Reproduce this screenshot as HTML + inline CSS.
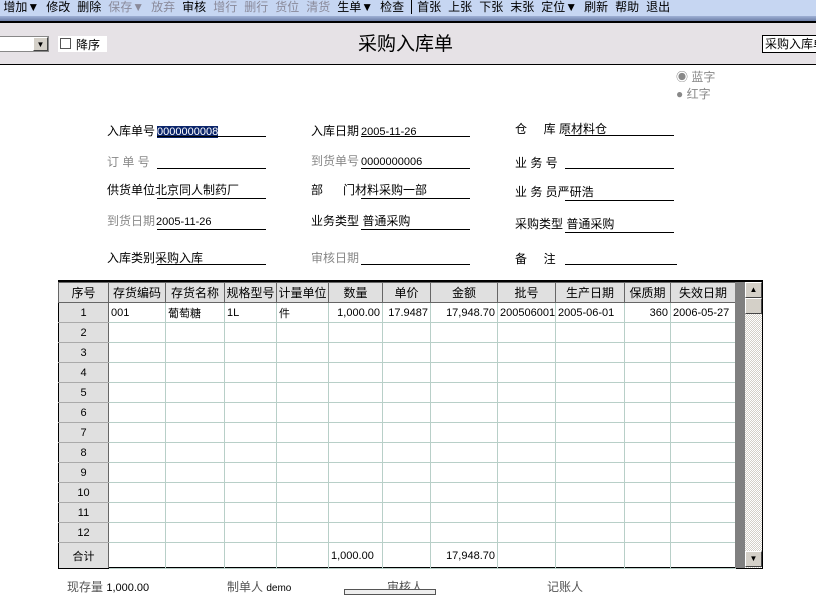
<!DOCTYPE html>
<html><head><meta charset="utf-8"><style>
*{margin:0;padding:0;box-sizing:border-box}
body{width:816px;height:593px;overflow:hidden;background:#fff;font-family:"Liberation Sans","Noto Sans CJK SC",sans-serif;font-size:12px;position:relative;color:#000}
.abs{position:absolute;white-space:nowrap}
#tb{position:absolute;left:0;top:0;width:816px;height:16px;background:#c6d6f2;font-size:12px;line-height:14px}
#tb span{margin-right:7px}
.g{color:#8a8a9a}
#band{position:absolute;left:0;top:16px;width:816px;height:7px;background:linear-gradient(#9fb1d6,#6d7fa8);border-bottom:2px solid #000}
#hdr{position:absolute;left:0;top:23px;width:816px;height:42px;background:#e6e2e6;border-bottom:1px solid #000}
.lbl{position:absolute;font-size:12px;white-space:nowrap}
.ul{position:absolute;height:1px;background:#000;width:109px}
table{position:absolute;left:58px;top:282px;border-collapse:collapse;font-size:11px;table-layout:fixed;width:677px}
td{border:1px solid #b8cfc8;height:20px;padding:0 2px;white-space:nowrap;overflow:hidden}
td.h{background:#e0e0e0;border:1px solid #666;text-align:center;font-size:12px;padding:0}
td.n{background:#e0e0e0;border-left:1px solid #000;border-right:1px solid #666;border-top:1px solid #aaa;border-bottom:1px solid #aaa;text-align:center}
.r{text-align:right}
</style></head><body>
<div id="tb">&nbsp;<span>增加▼</span><span>修改</span><span>删除</span><span class="g">保存▼</span><span class="g">放弃</span><span>审核</span><span class="g">增行</span><span class="g">删行</span><span class="g">货位</span><span class="g">清货</span><span>生单▼</span><span>检查</span><span style="border-left:1px solid #000;padding-left:5px">首张</span><span>上张</span><span>下张</span><span>末张</span><span>定位▼</span><span>刷新</span><span>帮助</span><span>退出</span></div>
<div id="band"></div>
<div id="hdr">
 <div class="abs" style="left:0;top:13px;width:49px;height:16px;background:#fff;border:1px solid #888;border-left:none"></div>
 <div class="abs" style="left:33px;top:14px;width:15px;height:14px;background:#d4d0c8;border:1px solid #fff;border-right-color:#444;border-bottom-color:#444;font-size:8px;text-align:center;line-height:13px">▼</div>
 <div class="abs" style="left:58px;top:13px;width:49px;height:16px;background:#fff"></div>
 <div class="abs" style="left:60px;top:15px;width:11px;height:11px;border:1px solid #555;background:#fff"></div>
 <div class="abs" style="left:76px;top:13px;font-size:12px">降序</div>
 <div class="abs" style="left:358px;top:6px;font-size:19px">采购入库单</div>
 <div class="abs" style="left:762px;top:12px;width:60px;height:18px;background:#fff;border:1px solid #000;border-right:none;font-size:12px;line-height:16px;padding-left:2px">采购入库单</div>
</div>
<div class="abs" style="left:676px;top:68px;color:#888">◉ 蓝字</div>
<div class="abs" style="left:676px;top:85px;color:#888">● <span>红字</span></div>

<div class="lbl" style="left:107px;top:122px">入库单号<span style="background:#0a246a;color:#fff;font-size:11px;margin-left:2px">0000000008</span></div><div class="ul" style="left:157px;top:136px"></div>
<div class="lbl" style="left:311px;top:122px">入库日期<span style="font-size:11px;margin-left:2px">2005-11-26</span></div><div class="ul" style="left:361px;top:136px"></div>
<div class="lbl" style="left:515px;top:120px">仓&nbsp;&nbsp;&nbsp;&nbsp;&nbsp;库 原材料仓</div><div class="ul" style="left:565px;top:135px"></div>

<div class="lbl" style="left:107px;top:153px;color:#888">订 单 号</div><div class="ul" style="left:157px;top:168px"></div>
<div class="lbl" style="left:311px;top:152px"><span style="color:#888">到货单号</span><span style="font-size:11px;margin-left:2px">0000000006</span></div><div class="ul" style="left:361px;top:168px"></div>
<div class="lbl" style="left:515px;top:154px">业 务 号</div><div class="ul" style="left:565px;top:168px"></div>

<div class="lbl" style="left:107px;top:181px">供货单位北京同人制药厂</div><div class="ul" style="left:157px;top:198px"></div>
<div class="lbl" style="left:311px;top:181px">部&nbsp;&nbsp;&nbsp;&nbsp;&nbsp;&nbsp;门材料采购一部</div><div class="ul" style="left:361px;top:198px"></div>
<div class="lbl" style="left:515px;top:183px">业 务 员严研浩</div><div class="ul" style="left:565px;top:200px"></div>

<div class="lbl" style="left:107px;top:212px"><span style="color:#888">到货日期</span><span style="font-size:11px;margin-left:1px">2005-11-26</span></div><div class="ul" style="left:157px;top:229px"></div>
<div class="lbl" style="left:311px;top:212px">业务类型 普通采购</div><div class="ul" style="left:361px;top:229px"></div>
<div class="lbl" style="left:515px;top:215px">采购类型 普通采购</div><div class="ul" style="left:565px;top:232px"></div>

<div class="lbl" style="left:107px;top:249px">入库类别采购入库</div><div class="ul" style="left:157px;top:264px"></div>
<div class="lbl" style="left:311px;top:249px;color:#888">审核日期</div><div class="ul" style="left:361px;top:264px"></div>
<div class="lbl" style="left:515px;top:250px">备&nbsp;&nbsp;&nbsp;&nbsp;&nbsp;注</div><div class="ul" style="left:565px;top:264px;width:112px"></div>

<div class="abs" style="left:58px;top:280px;width:705px;height:289px;border:2px solid #000;border-right:1px solid #000"></div>
<table>
<colgroup><col style="width:50px"><col style="width:57px"><col style="width:59px"><col style="width:52px"><col style="width:52px"><col style="width:54px"><col style="width:48px"><col style="width:67px"><col style="width:58px"><col style="width:69px"><col style="width:46px"><col style="width:65px"></colgroup>
<tr><td class="h">序号</td><td class="h">存货编码</td><td class="h">存货名称</td><td class="h">规格型号</td><td class="h">计量单位</td><td class="h">数量</td><td class="h">单价</td><td class="h">金额</td><td class="h">批号</td><td class="h">生产日期</td><td class="h">保质期</td><td class="h">失效日期</td></tr>
<tr><td class="n">1</td><td>001</td><td>葡萄糖</td><td>1L</td><td>件</td><td class="r">1,000.00</td><td class="r">17.9487</td><td class="r">17,948.70</td><td>200506001</td><td>2005-06-01</td><td class="r">360</td><td>2006-05-27</td></tr>
<tr><td class="n">2</td><td></td><td></td><td></td><td></td><td></td><td></td><td></td><td></td><td></td><td></td><td></td></tr>
<tr><td class="n">3</td><td></td><td></td><td></td><td></td><td></td><td></td><td></td><td></td><td></td><td></td><td></td></tr>
<tr><td class="n">4</td><td></td><td></td><td></td><td></td><td></td><td></td><td></td><td></td><td></td><td></td><td></td></tr>
<tr><td class="n">5</td><td></td><td></td><td></td><td></td><td></td><td></td><td></td><td></td><td></td><td></td><td></td></tr>
<tr><td class="n">6</td><td></td><td></td><td></td><td></td><td></td><td></td><td></td><td></td><td></td><td></td><td></td></tr>
<tr><td class="n">7</td><td></td><td></td><td></td><td></td><td></td><td></td><td></td><td></td><td></td><td></td><td></td></tr>
<tr><td class="n">8</td><td></td><td></td><td></td><td></td><td></td><td></td><td></td><td></td><td></td><td></td><td></td></tr>
<tr><td class="n">9</td><td></td><td></td><td></td><td></td><td></td><td></td><td></td><td></td><td></td><td></td><td></td></tr>
<tr><td class="n">10</td><td></td><td></td><td></td><td></td><td></td><td></td><td></td><td></td><td></td><td></td><td></td></tr>
<tr><td class="n">11</td><td></td><td></td><td></td><td></td><td></td><td></td><td></td><td></td><td></td><td></td><td></td></tr>
<tr><td class="n">12</td><td></td><td></td><td></td><td></td><td></td><td></td><td></td><td></td><td></td><td></td><td></td></tr>
<tr style="height:26px"><td class="n" style="border-bottom:1px solid #000">合计</td><td></td><td></td><td></td><td></td><td>1,000.00</td><td></td><td class="r">17,948.70</td><td></td><td></td><td></td><td></td></tr>
</table>
<div class="abs" style="left:735px;top:282px;width:10px;height:286px;background:#808080"></div>
<div class="abs" style="left:745px;top:282px;width:17px;height:286px;background:repeating-conic-gradient(#fff 0 25%,#d4d0c8 0 50%) 0 0/2px 2px"></div>
<div class="abs" style="left:745px;top:282px;width:17px;height:16px;background:#d4d0c8;border:1px solid #fff;border-right-color:#444;border-bottom-color:#444;font-size:8px;text-align:center;line-height:14px">▲</div>
<div class="abs" style="left:745px;top:298px;width:17px;height:16px;background:#d4d0c8;border:1px solid #fff;border-right-color:#444;border-bottom-color:#444"></div>
<div class="abs" style="left:745px;top:551px;width:17px;height:16px;background:#d4d0c8;border:1px solid #fff;border-right-color:#444;border-bottom-color:#444;font-size:8px;text-align:center;line-height:14px">▼</div>

<div class="abs" style="left:67px;top:578px;color:#555">现存量 <span style="color:#000;font-size:11px">1,000.00</span></div>
<div class="abs" style="left:227px;top:578px;color:#555">制单人 <span style="color:#000;font-size:10px">demo</span></div>
<div class="abs" style="left:387px;top:578px;color:#555">审核人</div>
<div class="abs" style="left:547px;top:578px;color:#555">记账人</div>
<div class="abs" style="left:344px;top:589px;width:92px;height:6px;border:1px solid #555;background:#eee"></div>
</body></html>
